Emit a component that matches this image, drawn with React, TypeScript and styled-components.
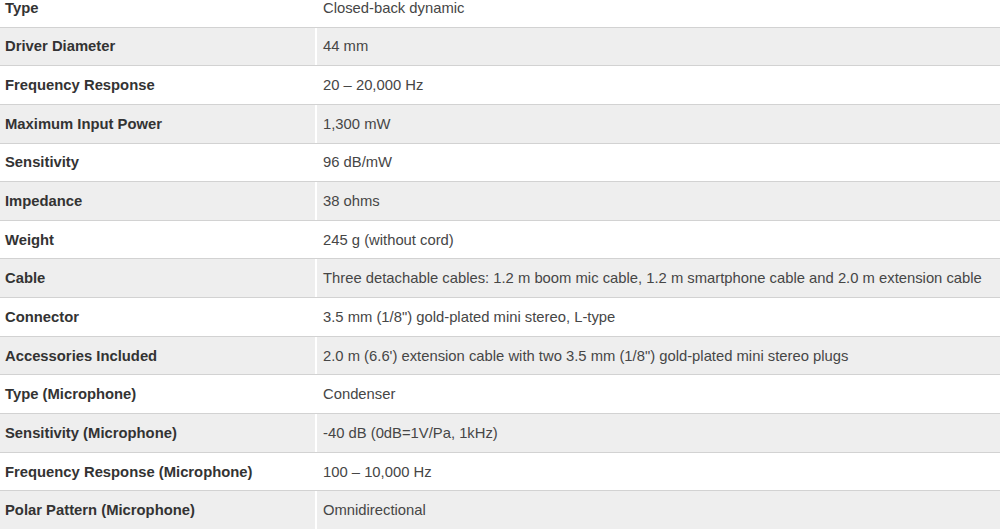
import React from "react";
import styled, { createGlobalStyle } from "styled-components";

const Global = createGlobalStyle`
  html, body { margin: 0; padding: 0; background: #ffffff; overflow: hidden; }
  body { font-family: "Liberation Sans", Arial, sans-serif; }
`;

const Table = styled.div`
  display: flex;
  flex-direction: column;
  width: 1000px;
  margin-top: -11px;
`;

const Row = styled.div<{ $shaded: boolean }>`
  display: grid;
  grid-template-columns: 315px 1fr;
  column-gap: 2px;
  height: 38.65px;
  box-sizing: border-box;
  border-bottom: 1px solid #d2d2d2;
  background: #ffffff;
  & > div {
    background: ${(p) => (p.$shaded ? "#eeeeee" : "#ffffff")};
  }
`;

const Label = styled.div`
  display: flex;
  align-items: center;
  padding-left: 5px;
  font-size: 14.8px;
  font-weight: bold;
  color: #333333;
  white-space: nowrap;
`;

const Value = styled.div`
  display: flex;
  align-items: center;
  padding-left: 6px;
  font-size: 14.8px;
  color: #464646;
  white-space: nowrap;
`;

const specs: [string, string][] = [
  ["Type", "Closed-back dynamic"],
  ["Driver Diameter", "44 mm"],
  ["Frequency Response", "20 – 20,000 Hz"],
  ["Maximum Input Power", "1,300 mW"],
  ["Sensitivity", "96 dB/mW"],
  ["Impedance", "38 ohms"],
  ["Weight", "245 g (without cord)"],
  ["Cable", "Three detachable cables: 1.2 m boom mic cable, 1.2 m smartphone cable and 2.0 m extension cable"],
  ["Connector", "3.5 mm (1/8\") gold-plated mini stereo, L-type"],
  ["Accessories Included", "2.0 m (6.6') extension cable with two 3.5 mm (1/8\") gold-plated mini stereo plugs"],
  ["Type (Microphone)", "Condenser"],
  ["Sensitivity (Microphone)", "-40 dB (0dB=1V/Pa, 1kHz)"],
  ["Frequency Response (Microphone)", "100 – 10,000 Hz"],
  ["Polar Pattern (Microphone)", "Omnidirectional"],
];

export default function App() {
  return (
    <>
      <Global />
      <Table>
        {specs.map(([k, v], i) => (
          <Row key={k} $shaded={i % 2 === 1}>
            <Label>{k}</Label>
            <Value>{v}</Value>
          </Row>
        ))}
      </Table>
    </>
  );
}
